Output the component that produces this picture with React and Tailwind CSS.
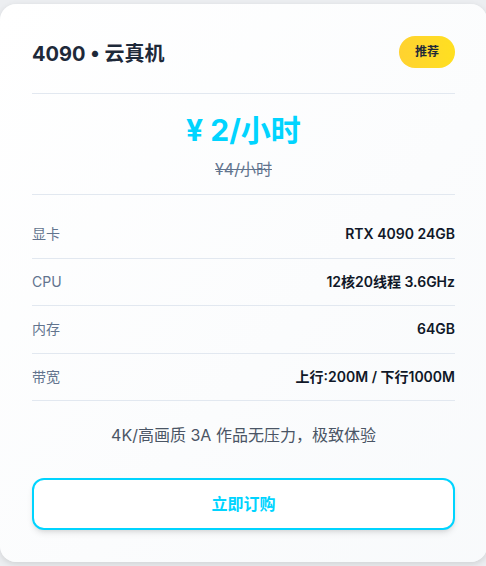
import React from "react";

const specs = [
  { label: "显卡", value: "RTX 4090 24GB" },
  { label: "CPU", value: "12核20线程 3.6GHz" },
  { label: "内存", value: "64GB" },
  { label: "带宽", value: "上行:200M / 下行1000M" },
];

const SpecRow = ({ label, value }) => (
  <div className="flex h-[47.6px] items-center justify-between border-b border-slate-200 text-sm">
    <span className="text-slate-500">{label}</span>
    <span className="font-semibold text-gray-900">{value}</span>
  </div>
);

export default function App() {
  return (
    <div
      className="min-h-[566px] bg-[#eceef1] pt-1"
      style={{ fontFamily: 'Inter, "Noto Sans CJK SC", sans-serif' }}
    >
      <div className="w-[487px] rounded-2xl bg-gradient-to-br from-white to-slate-50 px-8 pt-8 pb-8 shadow-[0_2px_6px_rgba(0,0,0,0.12)]">
        {/* header */}
        <div className="flex items-center justify-between pb-[25px]">
          <h2 className="mt-[3px] text-xl font-bold text-gray-800">4090 • 云真机</h2>
          <span className="flex h-8 items-center rounded-full bg-gradient-to-r from-amber-300 to-yellow-300 px-4 text-xs font-semibold text-gray-800">
            推荐
          </span>
        </div>

        {/* price */}
        <div className="flex flex-col items-center border-y border-slate-200 pt-[18px] pb-[13px]">
          <div className="text-3xl leading-9 font-bold text-[#00d4ff]">¥ 2/小时</div>
          <div className="mt-[9px] text-base text-slate-500 line-through">¥4/小时</div>
        </div>

        {/* specs */}
        <div className="mt-4">
          {specs.map((s) => (
            <SpecRow key={s.label} label={s.label} value={s.value} />
          ))}
        </div>

        <p className="mt-[22px] text-center text-base leading-6 text-gray-600">
          4K/高画质 3A 作品无压力，极致体验
        </p>

        <button className="mt-[31px] flex h-[52px] w-full items-center justify-center rounded-xl border-2 border-[#00d4ff] bg-white text-base font-bold text-[#00d4ff] shadow-md">
          立即订购
        </button>
      </div>
    </div>
  );
}
